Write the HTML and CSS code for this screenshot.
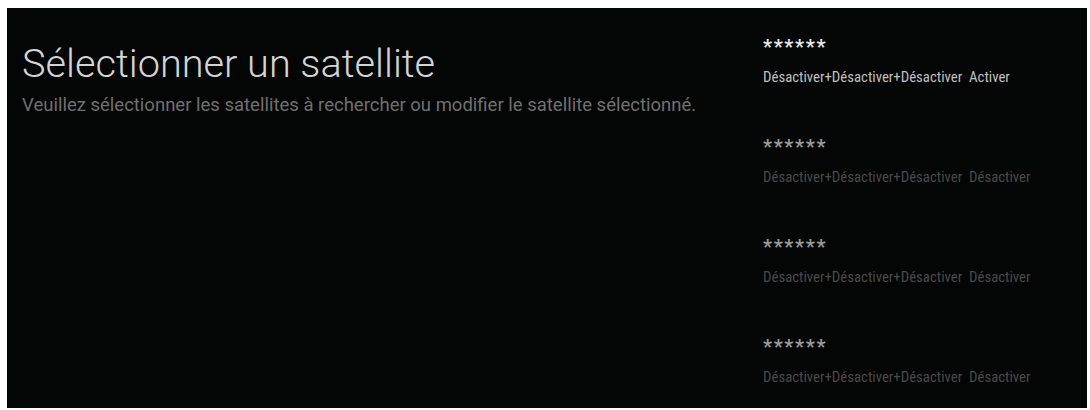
FILE: index.html
```html
<!DOCTYPE html>
<html lang="fr">
<head>
<meta charset="utf-8">
<title>Sélectionner un satellite</title>
<link rel="stylesheet" href="styles.css">
</head>
<body>
<main class="screen">
  <section class="intro">
    <h1 class="title">Sélectionner un satellite</h1>
    <p class="subtitle">Veuillez sélectionner les satellites à rechercher ou modifier le satellite sélectionné.</p>
  </section>
  <ul class="sat-list">
    <li class="sat sat-active">
      <span class="sat-name">******</span>
      <span class="sat-desc">Désactiver+Désactiver+Désactiver&nbsp; Activer</span>
    </li>
    <li class="sat">
      <span class="sat-name">******</span>
      <span class="sat-desc">Désactiver+Désactiver+Désactiver&nbsp; Désactiver</span>
    </li>
    <li class="sat">
      <span class="sat-name">******</span>
      <span class="sat-desc">Désactiver+Désactiver+Désactiver&nbsp; Désactiver</span>
    </li>
    <li class="sat">
      <span class="sat-name">******</span>
      <span class="sat-desc">Désactiver+Désactiver+Désactiver&nbsp; Désactiver</span>
    </li>
  </ul>
</main>
</body>
</html>
```
FILE: styles.css
```css
html, body {
  margin: 0;
  padding: 0;
  background: #ffffff;
}
body {
  padding: 8px 3px 2px 7px;
}
.screen {
  height: 400px;
  background: #040505;
  display: flex;
  justify-content: space-between;
  box-sizing: border-box;
  padding: 0 0 0 15px;
  overflow: hidden;
  font-family: Roboto, "Liberation Sans", sans-serif;
}
.intro {
  padding-top: 33px;
}
.title {
  margin: 0;
  font-weight: 300;
  font-size: 39.7px;
  line-height: 46px;
  color: #d4d4d4;
}
.subtitle {
  margin: 8px 0 0;
  font-size: 18.5px;
  line-height: 20px;
  color: #707070;
}
.sat-list {
  list-style: none;
  margin: 0;
  padding: 30px 0 0;
  width: 324px;
  display: flex;
  flex-direction: column;
  gap: 52px;
}
.sat {
  display: flex;
  flex-direction: column;
}
.sat-name {
  font-size: 20px;
  line-height: 18px;
  height: 18px;
  color: #9a9a9a;
  font-weight: 700;
  letter-spacing: 1.6px;
}
.sat-desc {
  margin-top: 12px;
  font-family: "Liberation Sans Narrow", "Roboto Condensed", Roboto, sans-serif;
  font-size: 14.8px;
  line-height: 18px;
  color: #4a4a4a;
}
.sat-active .sat-name {
  color: #e6e6e6;
}
.sat-active .sat-desc {
  color: #c0c0c0;
}
```
